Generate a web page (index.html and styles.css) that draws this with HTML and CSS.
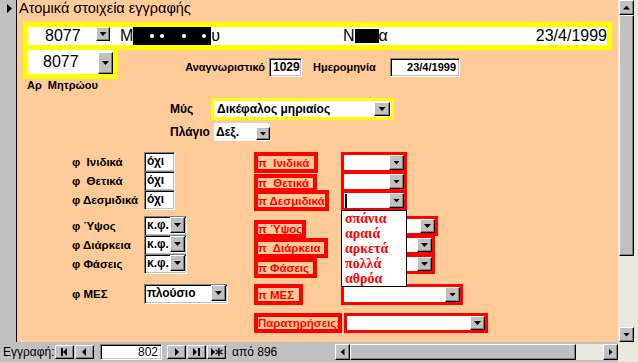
FILE: index.html
```html
<!DOCTYPE html>
<html lang="el">
<head>
    <meta charset="UTF-8">
    <title>Ατομικά στοιχεία εγγραφής</title>
    <link rel="stylesheet" href="styles.css">
</head>
<body>
<div class="window">
    <div class="selector">
        <svg width="6" height="9" viewBox="0 0 6 9"><polygon points="0,0 5,4.5 0,9" fill="#000"/></svg>
    </div>

    <div class="form">
        <div class="title">Ατομικά στοιχεία εγγραφής</div>

        <div class="topbar">
            <div class="top-id"><span>8077</span><span class="drop"></span></div>
            <div class="top-name">Μ<span class="blackout"><span class="dot"></span><span class="dot"></span><span class="dot"></span><span class="dot"></span></span>υ</div>
            <div class="top-rest">
                <span>Ν</span><span class="blackout short"></span><span>α</span>
                <span class="top-date">23/4/1999</span>
            </div>
        </div>

        <div class="row-id">
            <div class="id-combo"><span>8077</span><span class="drop tall"></span></div>
            <span class="lbl ident-lbl">Αναγνωριστικό</span>
            <span class="sunken ident-box">1029</span>
            <span class="lbl date-lbl">Ημερομηνία</span>
            <span class="sunken date-box">23/4/1999</span>
        </div>
        <div class="caption">Αρ&nbsp; Μητρώου</div>

        <div class="row-mys">
            <span class="mys-lbl">Μύς</span>
            <div class="mys-box"><span>Δικέφαλος μηριαίος</span><span class="drop"></span></div>
        </div>
        <div class="row-plagio">
            <span class="plagio-lbl">Πλάγιο</span>
            <div class="plagio-box"><span>Δεξ.</span><span class="drop"></span></div>
        </div>

        <div class="fields">
            <span class="flbl">φ&nbsp; Ινιδικά</span>
            <span class="sunken fbox">όχι</span>
            <span class="rlbl r-inidika">π&nbsp; Ινιδικά</span>
            <div class="rcombo rc-s"><span class="drop"></span></div>

            <span class="flbl">φ&nbsp; Θετικά</span>
            <span class="sunken fbox">όχι</span>
            <span class="rlbl r-thetika">π&nbsp; Θετικά</span>
            <div class="rcombo rc-s"><span class="drop"></span></div>

            <span class="flbl">φ Δεσμιδικά</span>
            <span class="sunken fbox">όχι</span>
            <span class="rlbl r-desmidika">π Δεσμιδικά</span>
            <div class="rcombo rc-s"><span class="caret"></span><span class="drop"></span></div>

            <span class="flbl">φ Ύψος</span>
            <div class="sunken fcombo"><span>κ.φ.</span><span class="drop"></span></div>
            <span class="rlbl r-ypsos">π Ύψος</span>
            <div class="rcombo rc-ypsos"><span class="drop"></span></div>

            <span class="flbl">φ Διάρκεια</span>
            <div class="sunken fcombo"><span>κ.φ.</span><span class="drop"></span></div>
            <span class="rlbl r-diarkeia">π&nbsp; Διάρκεια</span>
            <div class="rcombo rc-m"><span class="drop"></span></div>

            <span class="flbl">φ Φάσεις</span>
            <div class="sunken fcombo"><span>κ.φ.</span><span class="drop"></span></div>
            <span class="rlbl r-faseis">π Φάσεις</span>
            <div class="rcombo rc-m"><span class="drop"></span></div>

            <span class="flbl">φ ΜΕΣ</span>
            <div class="sunken fcombo wide"><span>πλούσιο</span><span class="drop"></span></div>
            <span class="rlbl r-mes">π ΜΕΣ</span>
            <div class="rcombo rc-mes"><span class="drop"></span></div>

            <span class="rlbl r-parat">Παρατηρήσεις:</span>
            <div class="rcombo rc-parat"><span class="drop"></span></div>
        </div>

        <ul class="droplist">
            <li>σπάνια</li>
            <li>αραιά</li>
            <li>αρκετά</li>
            <li>πολλά</li>
            <li>αθρόα</li>
        </ul>
    </div>

    <div class="vscroll">
        <span class="sbtn up"></span>
        <span class="vthumb"></span>
        <span class="vtrack"></span>
        <span class="sbtn down"></span>
    </div>

    <div class="statusbar">
        <div class="nav">
            <span class="nav-lbl">Εγγραφή:</span>
            <span class="navbtn"><svg width="17" height="12" viewBox="0 0 17 12"><rect x="5" y="2" width="2" height="8"/><polygon points="11,2 11,10 7,6"/></svg></span>
            <span class="navbtn"><svg width="17" height="12" viewBox="0 0 17 12"><polygon points="10,2 10,10 6,6"/></svg></span>
            <span class="sunken nav-box">802</span>
            <span class="navbtn"><svg width="17" height="12" viewBox="0 0 17 12"><polygon points="7,2 7,10 11,6"/></svg></span>
            <span class="navbtn"><svg width="17" height="12" viewBox="0 0 17 12"><polygon points="5,2 5,10 9,6"/><rect x="10" y="2" width="2" height="8"/></svg></span>
            <span class="navbtn"><svg width="17" height="12" viewBox="0 0 17 12"><polygon points="3,2 3,10 7,6"/><path d="M11 2v8M7.5 4l7 4M7.5 8l7-4" stroke="#000" stroke-width="1.4"/></svg></span>
            <span class="nav-count">από 896</span>
        </div>
        <div class="hscroll">
            <span class="sbtn left"></span>
            <span class="hthumb"></span>
            <span class="htrack"></span>
            <span class="sbtn right"></span>
        </div>
        <div class="corner"></div>
    </div>
</div>
</body>
</html>
```

FILE: styles.css
```css
* {
    box-sizing: border-box;
}
html, body {
    margin: 0;
    padding: 0;
}
body {
    width: 638px;
    height: 362px;
    overflow: hidden;
    background: #c0c0c0;
    color: #000;
    font-family: "Liberation Sans", Arial, sans-serif;
}
.window {
    display: grid;
    grid-template-columns: 17px 601px 20px;
    grid-template-rows: 342px 20px;
    height: 362px;
}
.selector {
    background: #c0c0c0;
    border-right: 1px solid #000;
    padding: 4px 0 0 7px;
    line-height: 0;
}
.form {
    position: relative;
    background: #ffcc99;
}
.title {
    height: 22px;
    padding-left: 2px;
    font-size: 14.5px;
    line-height: 16px;
}

/* shared bevel for buttons and thumbs */
.drop, .sbtn, .navbtn, .vthumb, .hthumb {
    display: flex;
    align-items: center;
    justify-content: center;
    flex: none;
    background: #c0c0c0;
    border: 1px solid;
    border-color: #fff #000 #000 #fff;
    box-shadow: inset -1px -1px #808080;
}
.drop::after, .up::after, .down::after {
    content: "";
    width: 7px;
    height: 4px;
    background: #000;
    clip-path: polygon(0 0, 100% 0, 50% 100%);
}
.up::after {
    clip-path: polygon(50% 0, 100% 100%, 0 100%);
}
.left::after, .right::after {
    content: "";
    width: 4px;
    height: 7px;
    background: #000;
    clip-path: polygon(100% 0, 100% 100%, 0 50%);
}
.right::after {
    clip-path: polygon(0 0, 100% 50%, 0 100%);
}
.sunken {
    background: #fff;
    border: 1px solid;
    border-color: #808080 #fff #fff #808080;
    box-shadow: inset 1px 1px #000, inset -1px -1px #c0c0c0;
}

/* yellow header */
.topbar {
    display: flex;
    margin-left: 6px;
    width: 589px;
    height: 28px;
    border: 5px solid #ffff00;
    background: #fff;
    font-size: 16px;
    line-height: 18px;
}
.top-id {
    display: flex;
    width: 82px;
    padding-left: 17px;
}
.top-id .drop {
    margin-left: auto;
    width: 14px;
    height: 14px;
}
.top-name {
    display: flex;
    width: 225px;
    margin-left: 8px;
    padding-left: 2px;
}
.blackout {
    display: flex;
    align-items: center;
    width: 78px;
    height: 18px;
    padding-left: 17px;
    background: #000;
}
.blackout.short {
    width: 24px;
    height: 14px;
    margin-top: 2px;
    padding: 0;
}
.dot {
    width: 4px;
    height: 4px;
    border-radius: 50%;
    background: #fff;
}
.dot + .dot { margin-left: 6px; }
.dot:nth-child(3) { margin-left: 18px; }
.dot:nth-child(4) { margin-left: 16px; }
.top-rest {
    display: flex;
    flex: 1;
}
.top-date {
    margin-left: auto;
}

.row-id {
    display: flex;
    align-items: flex-start;
    height: 29px;
    margin-left: 6px;
}
.id-combo {
    display: flex;
    width: 95px;
    height: 29px;
    padding-left: 15px;
    border: 5px solid #ffff00;
    border-top: 0;
    background: #fff;
    font-size: 16px;
    line-height: 24px;
}
.drop.tall {
    margin-left: auto;
    margin-top: 2px;
    width: 15px;
    height: 22px;
}
.lbl {
    font-size: 11px;
    font-weight: bold;
    white-space: nowrap;
}
.ident-lbl {
    width: 147px;
    margin-top: 8px;
    text-align: right;
    line-height: 19px;
}
.ident-box {
    width: 33px;
    height: 19px;
    margin: 8px 0 0 4px;
    padding-left: 3px;
    font-size: 12px;
    font-weight: bold;
    line-height: 17px;
}
.date-lbl {
    width: 77px;
    margin: 8px 0 0 11px;
    line-height: 19px;
}
.date-box {
    width: 70px;
    height: 19px;
    margin-top: 8px;
    padding-right: 3px;
    text-align: right;
    font-size: 11px;
    font-weight: bold;
    line-height: 17px;
}
.caption {
    height: 12px;
    margin-left: 10px;
    font-size: 11px;
    font-weight: bold;
    line-height: 12px;
}

.row-mys, .row-plagio {
    display: flex;
    align-items: center;
    margin-left: 153px;
    font-size: 12px;
    font-weight: bold;
}
.row-mys {
    height: 22px;
    margin-top: 7px;
}
.mys-lbl { width: 41px; }
.mys-box {
    display: flex;
    align-items: center;
    width: 183px;
    height: 22px;
    padding-left: 3px;
    border: 3px solid #ffff00;
    background: #fff;
}
.mys-box .drop {
    margin-left: auto;
    margin-right: 1px;
    width: 16px;
    height: 14px;
}
.row-plagio {
    height: 18px;
    margin-top: 3px;
}
.plagio-lbl { width: 44px; }
.plagio-box {
    display: flex;
    align-items: center;
    width: 56px;
    height: 18px;
    padding-left: 2px;
    background: #fff;
}
.plagio-box .drop {
    margin-left: auto;
    margin-top: 3px;
    width: 14px;
    height: 13px;
}

/* phi / pi fields */
.fields {
    display: grid;
    grid-template-columns: 72px 110px 87px 1fr;
    grid-template-rows: 19px 19px 26px 19px 19px 30px 29px 20px;
    align-items: start;
    margin: 11px 0 0 55px;
}
.flbl {
    font-size: 11.5px;
    font-weight: bold;
    line-height: 20px;
    white-space: nowrap;
}
.fbox, .fcombo {
    height: 20px;
    padding-left: 2px;
    font-size: 12px;
    font-weight: bold;
    line-height: 16px;
}
.fbox { width: 31px; }
.fcombo {
    display: flex;
    width: 43px;
}
.fcombo.wide { width: 84px; }
.fcombo .drop {
    margin-left: auto;
    margin-right: 1px;
    width: 15px;
    height: 16px;
}
.rlbl {
    display: flex;
    align-items: center;
    border: 4px solid #ff0000;
    color: #ff0000;
    font-size: 11.5px;
    font-weight: bold;
    white-space: nowrap;
}
.r-inidika { width: 64px; height: 21px; }
.r-thetika { width: 63px; height: 18px; margin-top: 3px; }
.r-desmidika { width: 75px; height: 21px; }
.r-ypsos { width: 52px; height: 18px; margin-top: 4px; }
.r-diarkeia { width: 74px; height: 20px; margin-top: 3px; }
.r-faseis { width: 63px; height: 20px; margin-top: 4px; }
.r-mes { width: 49px; height: 21px; }
.r-parat { grid-column: 3; width: 88px; height: 20px; }
.rcombo {
    display: flex;
    height: 21px;
    border: 3px solid #ff0000;
    background: #fff;
}
.rcombo .drop {
    margin-left: auto;
    width: 15px;
}
.rc-s { width: 66px; }
.rc-ypsos { width: 97px; height: 20px; }
.rc-m { width: 94px; height: 20px; }
.rc-mes { width: 122px; }
.rc-parat { width: 144px; height: 20px; margin-left: 3px; }
.caret {
    align-self: center;
    width: 2px;
    height: 14px;
    margin-left: 1px;
    background: #000;
}

.droplist {
    position: absolute;
    left: 324px;
    top: 210px;
    width: 66px;
    height: 77px;
    margin: 0;
    padding: 0 0 0 3px;
    list-style: none;
    background: #fff;
    border: 1px solid #000;
    color: #ff0000;
    font-family: "Liberation Serif", "Times New Roman", serif;
    font-size: 14px;
    font-weight: bold;
    line-height: 15px;
}

/* scrollbars */
.vscroll {
    display: flex;
    flex-direction: column;
    padding: 0 4px 0 1px;
    background: #ebe9dd;
}
.vscroll .sbtn { height: 15px; }
.vthumb { height: 241px; }
.vtrack { flex: 1; }

.statusbar {
    grid-column: 1 / -1;
    display: flex;
    background: #c0c0c0;
}
.nav {
    display: flex;
    align-items: center;
    width: 335px;
    font-size: 12px;
}
.nav-lbl {
    width: 55px;
    padding-left: 3px;
}
.navbtn {
    width: 19px;
    height: 14px;
    margin-right: 1px;
}
.navbtn svg { fill: #000; }
.nav-box {
    width: 62px;
    height: 16px;
    margin: 0 5px;
    padding-right: 3px;
    text-align: right;
    line-height: 14px;
}
.nav-count { margin-left: 5px; }
.hscroll {
    display: flex;
    width: 283px;
    height: 16px;
    margin-top: 2px;
    background: #ebe9dd;
}
.hscroll .sbtn { width: 15px; }
.hthumb { width: 226px; }
.htrack { flex: 1; }
.corner {
    flex: 1;
    background: #ebe9dd;
}
```
